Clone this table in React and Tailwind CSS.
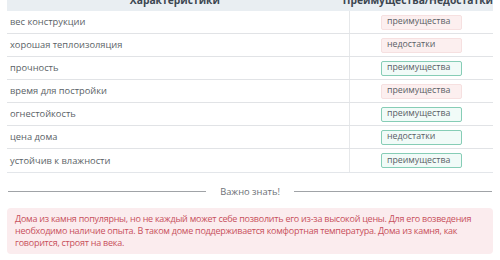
const rows = [
  { name: 'вес конструкции', label: 'преимущества', ok: false },
  { name: 'хорошая теплоизоляция', label: 'недостатки', ok: false },
  { name: 'прочность', label: 'преимущества', ok: true },
  { name: 'время для постройки', label: 'преимущества', ok: false },
  { name: 'огнестойкость', label: 'преимущества', ok: true },
  { name: 'цена дома', label: 'недостатки', ok: true },
  { name: 'устойчив к влажности', label: 'преимущества', ok: true },
];

export default function App() {
  return (
    <div className="w-[500px] h-[260px] overflow-hidden bg-white font-['Open_Sans',sans-serif] text-[9.3px]">
      <div className="mx-[7px] mt-[-9px] border-b border-[#e3e6ea]">
        <div className="flex h-[20px] bg-[#e9eef2] text-[#3c4650] font-bold text-[10.3px] whitespace-nowrap">
          <div className="w-[343px] flex items-center justify-center">Характеристики</div>
          <div className="flex-1 flex items-center justify-center">Преимущества/Недостатки</div>
        </div>
        {rows.map((r) => (
          <div key={r.name} className="flex h-[23px] border-b border-[#e1e3e6] last:border-b-0 text-[#5a5f66]">
            <div className="w-[343px] flex items-center pl-[3px] border-r border-[#e6e8ea]">{r.name}</div>
            <div className="flex-1 flex items-center pl-[31px]">
              <div
                className={
                  r.ok
                    ? 'w-[81px] h-[15px] flex items-center pl-[5px] whitespace-nowrap text-[8.8px] rounded-[2px] border border-[#86cdb6] bg-[#f1fbf8]'
                    : 'w-[81px] h-[15px] flex items-center pl-[5px] whitespace-nowrap text-[8.8px] rounded-[2px] border border-[#f6e0e0] bg-[#fcefef]'
                }
              >
                {r.label}
              </div>
            </div>
          </div>
        ))}
      </div>
      <div className="flex items-center mx-[8px] mt-[12px] text-[#6b6f75]">
        <div className="flex-1 h-px bg-[#a0a3a7]" />
        <div className="px-[14px]">Важно знать!</div>
        <div className="flex-1 h-px bg-[#a0a3a7]" />
      </div>
      <div className="mx-[7px] mt-[9px] rounded-[4px] bg-[#fbecee] pl-[8px] pr-[2px] pt-[5px] pb-[5px] text-[9px] tracking-[-0.25px] text-[#c8505c] leading-[12px]">
        Дома из камня популярны, но не каждый может себе позволить его из-за высокой цены. Для его возведения необходимо наличие опыта. В таком доме поддерживается комфортная температура. Дома из камня, как говорится, строят на века.
      </div>
    </div>
  );
}
